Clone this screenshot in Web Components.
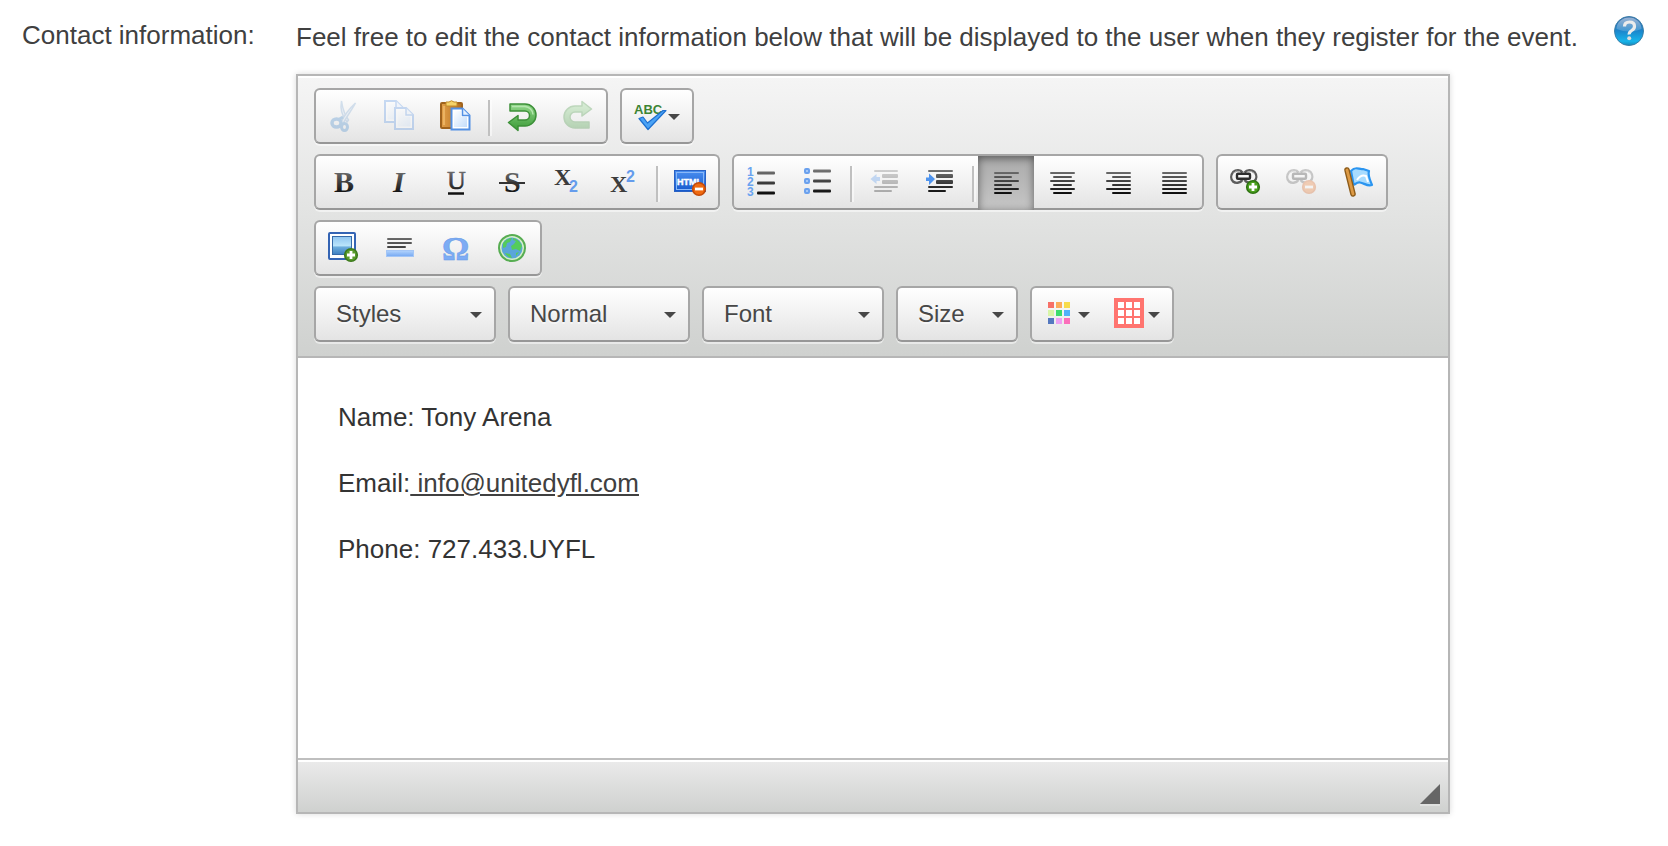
<!DOCTYPE html>
<html lang="en">
<head>
<meta charset="utf-8">
<title>Contact information</title>
<style>
    body {
        margin: 0;
        background: #fff;
        color: #404040;
        font-family: "Liberation Sans", Arial, Helvetica, sans-serif;
        font-size: 26px;
        line-height: 40px;
    }

    p {
        margin: 0 0 26px;
    }

    p a {
        color: #404040;
    }
</style>
</head>
<body>

<form-row>
    <span slot="label">Contact information:</span>
    <help-text slot="intro">Feel free to edit the contact information below that will be displayed to the user when they register for the event.</help-text>

    <rich-editor>
        <tool-row slot="toolbar">
            <tool-group>
                <tool-button icon="cut" label="Cut" disabled></tool-button>
                <tool-button icon="copy" label="Copy" disabled></tool-button>
                <tool-button icon="paste" label="Paste"></tool-button>
                <tool-separator></tool-separator>
                <tool-button icon="undo" label="Undo"></tool-button>
                <tool-button icon="redo" label="Redo" disabled></tool-button>
            </tool-group>
            <tool-group>
                <tool-button icon="spell" label="Spell check" menu></tool-button>
            </tool-group>
        </tool-row>

        <tool-row slot="toolbar">
            <tool-group>
                <tool-button icon="bold" label="Bold"></tool-button>
                <tool-button icon="italic" label="Italic"></tool-button>
                <tool-button icon="underline" label="Underline"></tool-button>
                <tool-button icon="strike" label="Strike through"></tool-button>
                <tool-button icon="sub" label="Subscript"></tool-button>
                <tool-button icon="sup" label="Superscript"></tool-button>
                <tool-separator></tool-separator>
                <tool-button icon="html" label="Remove format"></tool-button>
            </tool-group>
            <tool-group>
                <tool-button icon="numbers" label="Numbered list"></tool-button>
                <tool-button icon="bullets" label="Bulleted list"></tool-button>
                <tool-separator></tool-separator>
                <tool-button icon="outdent" label="Decrease indent" disabled></tool-button>
                <tool-button icon="indent" label="Increase indent"></tool-button>
                <tool-separator></tool-separator>
                <tool-button icon="left" label="Align left" pressed></tool-button>
                <tool-button icon="center" label="Center"></tool-button>
                <tool-button icon="right" label="Align right"></tool-button>
                <tool-button icon="justify" label="Justify"></tool-button>
            </tool-group>
            <tool-group>
                <tool-button icon="link" label="Link"></tool-button>
                <tool-button icon="unlink" label="Unlink" disabled></tool-button>
                <tool-button icon="anchor" label="Anchor"></tool-button>
            </tool-group>
        </tool-row>

        <tool-row slot="toolbar">
            <tool-group>
                <tool-button icon="image" label="Image"></tool-button>
                <tool-button icon="rule" label="Horizontal line"></tool-button>
                <tool-button icon="omega" label="Special character"></tool-button>
                <tool-button icon="globe" label="IFrame"></tool-button>
            </tool-group>
        </tool-row>

        <tool-row slot="toolbar">
            <tool-combo label="Styles"></tool-combo>
            <tool-combo label="Normal"></tool-combo>
            <tool-combo label="Font"></tool-combo>
            <tool-combo label="Size" small></tool-combo>
            <tool-group>
                <tool-button icon="colors" label="Text color" menu></tool-button>
                <tool-button icon="table" label="Background color" menu></tool-button>
            </tool-group>
        </tool-row>

        <p>Name: Tony Arena</p>
        <p>Email:<a href="mailto:info@unitedyfl.com">&nbsp;info@unitedyfl.com</a></p>
        <p>Phone: 727.433.UYFL</p>
    </rich-editor>
</form-row>

<script>
// shared gradients, each svg gets its own copy because ids don't cross shadow roots
const DEFS = `
    <defs>
        <linearGradient id="ink" gradientUnits="userSpaceOnUse" x1="0" y1="3" x2="0" y2="28">
            <stop offset="0" stop-color="#777"/><stop offset="1" stop-color="#0c0c0c"/>
        </linearGradient>
        <linearGradient id="blue" x1="0" y1="0" x2="0" y2="1">
            <stop offset="0" stop-color="#b4d4fd"/><stop offset="1" stop-color="#74a8f2"/>
        </linearGradient>
        <linearGradient id="page" x1="0" y1="0" x2="1" y2="1">
            <stop offset="0" stop-color="#fff"/><stop offset="1" stop-color="#c4ddfb"/>
        </linearGradient>
        <linearGradient id="green" x1="0" y1="0" x2="0" y2="1">
            <stop offset="0" stop-color="#93d88b"/><stop offset="1" stop-color="#3a9a36"/>
        </linearGradient>
        <linearGradient id="wood" x1="0" y1="0" x2="1" y2="0">
            <stop offset="0" stop-color="#e2a04a"/><stop offset="1" stop-color="#b36c1c"/>
        </linearGradient>
        <linearGradient id="screen" x1="0" y1="0" x2="0" y2="1">
            <stop offset="0" stop-color="#4b8ff0"/><stop offset="1" stop-color="#1559cc"/>
        </linearGradient>
        <linearGradient id="sky" x1="0" y1="0" x2="0" y2="1">
            <stop offset="0" stop-color="#8fc4f0"/><stop offset=".5" stop-color="#b9e4fb"/>
            <stop offset=".6" stop-color="#6bacdc"/><stop offset="1" stop-color="#3f7fc0"/>
        </linearGradient>
    </defs>`;

// horizontal bars: [x1, x2, y, thickness]
const bars = (list) => `<g fill="url(#ink)">${list.map(([a, b, y, w = 2]) =>
    `<rect x="${a}" y="${y - w / 2}" width="${b - a}" height="${w}" rx="1"/>`).join('')}</g>`;

const badge = (x, y, color, edge, plus) => `
    <circle cx="${x}" cy="${y}" r="6.3" fill="${color}" stroke="${edge}" stroke-width="1.6"/>
    <path d="M${x - 4} ${y}h8${plus ? `M${x} ${y - 4}v8` : ''}" stroke="#fff" stroke-width="2.8" fill="none"/>`;

const alignRows = (a, b) => bars([7, 11, 15, 19, 23, 27].map((y, i) => i % 2 ? [a, b, y] : [4, 29, y]));

const chain = `
    <g fill="none" stroke="#5c5c5c" stroke-width="2.4">
        <path d="M12.500 14C10 17.500 5.500 17.500 3 15.500C.6 13 .6 9 3.200 6C6 3.500 10.500 3.500 12.500 6.500"/>
        <path d="M14.500 6.500C17 3.500 21.500 3.500 24.500 6C27 9 27 13 24 15.500C21.500 17.500 17 17.500 14.500 14"/>
        <rect x="7" y="7.800" width="13" height="5" rx="1" stroke="#2c2c2c" stroke-width="2.400"/>
    </g>
    <path d="M3 7.500Q6 4 10 5.500M17.500 5.500Q21.500 4.200 24.500 7.500" fill="none" stroke="#b5b5b5" stroke-width="1"/>`;

const page = (x, y) => `
    <path d="M${x} ${y}h11l7 7v14h-18z" fill="#fff" stroke="#5390e4" stroke-width="2"/>
    <path d="M${x + 2.5} ${y + 2.5}h7v6h6v10h-13z" fill="url(#page)"/>
    <path d="M${x + 11} ${y}v7h7" fill="#e4f0ff" stroke="#5390e4" stroke-width="1.500"/>`;

// the nine little squares of the colour menus
const squares = (colors) => colors.map((c, i) =>
    `<rect x="${4 + i % 3 * 8}" y="${4 + Math.floor(i / 3) * 8}" width="6" height="6" fill="${c}"/>`).join('');

const SERIF = 'font-family="Liberation Serif, serif"';
const SANS = 'font-family="Liberation Sans, sans-serif" font-weight="bold"';

const ICONS = {
    cut: `
        <path d="M13.500 1C12 9 14 16 19 22l1.500-2C16 14 14.500 8 13.500 1z" fill="#d7e6f6" stroke="#7ba6d2" stroke-width="1.500"/>
        <path d="M27.500 3C22 8 16 16 12.500 23l2.500 1C18 17 24 10 27.500 3z" fill="#d7e6f6" stroke="#7ba6d2" stroke-width="1.500"/>
        <ellipse cx="8.500" cy="23" rx="4.500" ry="4" fill="none" stroke="#3c86cc" stroke-width="3.500"/>
        <ellipse cx="16.500" cy="27" rx="3" ry="3.500" fill="none" stroke="#3c86cc" stroke-width="3"/>
        <path d="M10 20l5-3" stroke="#3c86cc" stroke-width="3"/>`,
    copy: page(1, 1) + page(11, 8),
    paste: `
        <rect x="1" y="3" width="21" height="25" rx="1" fill="url(#wood)" stroke="#a0631d" stroke-width="2"/>
        <path d="M6 2h3q2.500-2.500 5 0h3v4H6z" fill="#f5d36a" stroke="#c08a2a" stroke-width="1"/>
        <path d="M4 6v19" stroke="#f0bb6c" stroke-width="1.500"/>` + page(11.5, 8.5),
    undo: `
        <path d="M4 4h15a11 11 0 0 1 0 22h-7v4.500L2.500 22.500L12 15.500V20h7a4.500 4.500 0 0 0 0-9H4z" fill="url(#green)" stroke="#3c9038" stroke-width="1.500" stroke-linejoin="round"/>
        <path d="M6 6.500h13a8.500 8.500 0 0 1 8 8" fill="none" stroke="#b5e6ae" stroke-width="1.500"/>`,
    redo: `
        <path d="M27 28H13a11 11 0 0 1 0-22h7V1.500L29.500 9L20 16v-4h-7a5 5 0 0 0 0 10h14z" fill="url(#green)" stroke="#3c9038" stroke-width="1.500" stroke-linejoin="round"/>`,
    spell: `
        <text x="0" y="14" ${SANS} font-size="13" fill="#3d8433">ABC</text>
        <path d="M5 18.500l4-1.500 4.500 6L29 10.500h3L14 29.500z" fill="#4ba3f5" stroke="#1d6fd0" stroke-width="1.200" stroke-linejoin="round"/>`,
    bold: `<text x="6" y="26" ${SERIF} font-size="30" font-weight="bold" fill="url(#ink)">B</text>`,
    italic: `<text x="9" y="26" ${SERIF} font-size="30" font-weight="bold" font-style="italic" fill="url(#ink)">I</text>`,
    underline: `<text x="7" y="23" ${SERIF} font-size="26" fill="url(#ink)" stroke="url(#ink)" stroke-width=".6">U</text>
        <path d="M8 27.500h16" stroke="#111" stroke-width="2.500"/>`,
    strike: `<text x="8" y="26" ${SERIF} font-size="30" font-weight="bold" fill="url(#ink)">S</text>
        <path d="M3 17h26" stroke="#333" stroke-width="2"/>`,
    sub: `<text x="2" y="19" ${SERIF} font-size="24" font-weight="bold" fill="#3c3c3c">X</text>
        <text x="17" y="26" ${SANS} font-size="16" fill="#659cec">2</text>`,
    sup: `<text x="2" y="26" ${SERIF} font-size="24" font-weight="bold" fill="#3c3c3c">X</text>
        <text x="18" y="16" ${SANS} font-size="16" fill="#659cec">2</text>`,
    html: `
        <rect x=".5" y="4.500" width="31" height="21" fill="url(#screen)" stroke="#2a62c4"/>
        <rect x="2.500" y="6.500" width="27" height="17" fill="none" stroke="#8ab8f8" stroke-width="1"/>
        <text x="3" y="18.500" ${SANS} font-size="9" fill="#fff" stroke="#fff" stroke-width=".4">HTML</text>` + badge(25, 23, '#f06a10', '#c44a08', false),
    numbers: `
        <g ${SANS} font-size="12" fill="#69a3f0"><text x="1" y="10">1</text><text x="1" y="20">2</text><text x="1" y="30">3</text></g>`
        + bars([[11, 29, 7, 3], [11, 29, 17, 3], [11, 29, 27, 3]]),
    bullets: `
        <g fill="#a5c8f7" stroke="#6ba1ee" stroke-width="2"><rect x="3" y="3" width="4" height="4" rx="1"/><rect x="3" y="13" width="4" height="4" rx="1"/><rect x="3" y="23" width="4" height="4" rx="1"/></g>`
        + bars([[11, 29, 5, 3], [11, 29, 15, 3], [11, 29, 25, 3]]),
    outdent: bars([[6, 30, 5], [14, 30, 10, 4], [14, 30, 16, 4], [6, 30, 21], [6, 24, 25]])
        + `<path d="M2.500 13l6-5v3h3.500v4H8.500v3z" fill="#4f94ee"/>`,
    indent: bars([[4, 29, 5], [12, 29, 10, 4], [12, 29, 16, 4], [4, 29, 21], [4, 22, 25]])
        + `<path d="M11 13l-6-5.500v4H2v3.500h3v4z" fill="#4f94ee"/>`,
    left: alignRows(4, 22),
    center: alignRows(7, 26),
    right: alignRows(10, 29),
    justify: alignRows(4, 29),
    link: chain + badge(23, 21, '#4ba01e', '#2f7412', true),
    unlink: chain + badge(23, 21, '#f07828', '#d8601c', false),
    anchor: `
        <path d="M9 5C14-.5 17 4 21 3l6 2c-1.500 4 1 9 3 14c-5 1.500-8-2-12-2.500S12 20 11.500 18z" fill="#a8dcff" stroke="#2b95f0" stroke-width="2.200" stroke-linejoin="round"/>
        <path d="M15 14q4-6 9-4l2 6" fill="none" stroke="#fff" stroke-width="2"/>
        <path d="M5 4l6 24" stroke="#8d5c1a" stroke-width="5.500" stroke-linecap="round"/>
        <path d="M5 4l6 24" stroke="#dd9a45" stroke-width="2.800" stroke-linecap="round"/>`,
    image: `
        <rect x="1" y="1" width="26" height="26" rx="1" fill="#fff" stroke="#3464b4" stroke-width="2"/>
        <rect x="4.500" y="4.500" width="19" height="18" fill="url(#sky)" stroke="#356aa8"/>` + badge(23, 23, '#5a9c2c', '#3c7a1c', true),
    rule: bars([[3, 28, 7], [3, 28, 11], [3, 22, 15]])
        + `<rect x="2.500" y="18.500" width="27" height="6" fill="url(#blue)" stroke="#a4c6f6"/>`,
    omega: `<text x="2" y="28" ${SERIF} font-size="34" font-weight="bold" fill="#7dacf4" stroke="#6699e6" stroke-width=".5">Ω</text>`,
    globe: `
        <circle cx="16" cy="16" r="13" fill="#d5efc9" stroke="#57ad52" stroke-width="2"/>
        <circle cx="16" cy="16" r="10.500" fill="#5aa5da"/>
        <path d="M7 11q4-5 9-5l-2 4-3 1-1 4-3 1zM17 6q7 2 9 8l-2 5-4-2-4 1-1-4 3-2 2-3-3-1zM9 21l5 1 2 4q-4 0-7-5zM20 21l3-1-3 4z" fill="#54cc5c"/>`,
    colors: squares(['#f77068', '#fbac5c', '#f7dc4c', '#d8f5a8', '#3ddb6c', '#52b1fa', '#5478bf', '#eda2f3', '#fb6fbb']),
    table: '<rect width="30" height="30" fill="#ff746f"/>' + squares(Array(9).fill('#fff'))
};

const ARROW = `<svg class="arrow" width="12" height="6" viewBox="0 0 12 6" aria-hidden="true"><path d="M0 0h12L6 6z" fill="#474747"/></svg>`;

class FormRow extends HTMLElement {
    constructor() {
        super();
        this.attachShadow({ mode: 'open' });
        this.shadowRoot.innerHTML = `
        <style>
        :host {
            display: grid;
            grid-template-columns: 274px minmax(0, 1fr);
            padding: 15px 24px 30px 22px;
        }

        .field {
            display: flex;
            flex-direction: column;
            gap: 17px;
            padding-top: 2px;
        }
        </style>
        <div><slot name="label"></slot></div>
        <div class="field"><slot name="intro"></slot><slot></slot></div>
        `;
    }
}
customElements.define('form-row', FormRow);

class HelpText extends HTMLElement {
    constructor() {
        super();
        this.attachShadow({ mode: 'open' });
        this.shadowRoot.innerHTML = `
        <style>
        :host {
            display: flex;
            align-items: flex-start;
            justify-content: space-between;
            gap: 8px;
        }

        button {
            flex: none;
            margin: -1px 0 0;
            padding: 0;
            border: 0;
            background: none;
            cursor: help;
        }

        svg {
            display: block;
        }
        </style>
        <span><slot></slot></span>
        <button type="button" aria-label="Help">
            <svg width="30" height="30" viewBox="0 0 30 30">
                <defs>
                    <linearGradient id="ball" x1="0" y1="0" x2="0" y2="1">
                        <stop offset="0" stop-color="#3466a8"/><stop offset=".5" stop-color="#1b86cc"/>
                        <stop offset=".85" stop-color="#17b4ea"/><stop offset="1" stop-color="#1689b8"/>
                    </linearGradient>
                    <linearGradient id="shine" x1="0" y1="0" x2="0" y2="1">
                        <stop offset="0" stop-color="#fff" stop-opacity=".5"/><stop offset="1" stop-color="#fff" stop-opacity=".15"/>
                    </linearGradient>
                </defs>
                <circle cx="15" cy="15" r="14.500" fill="url(#ball)" stroke="#3c7fa8" stroke-width="1"/>
                <path d="M2.500 13a12.500 11.500 0 0 1 25 0q-12 5-25 0z" fill="url(#shine)"/>
                <path d="M10.500 10.500q0-4.500 5-4.500t5 4.200q0 2.600-2.800 4.300t-2.500 4" fill="none" stroke="#ececec" stroke-width="3.200"/>
                <circle cx="15.200" cy="22.300" r="2" fill="#dcdcdc"/>
            </svg>
        </button>
        `;
    }
}
customElements.define('help-text', HelpText);

class RichEditor extends HTMLElement {
    constructor() {
        super();
        this.attachShadow({ mode: 'open' });
        this.shadowRoot.innerHTML = `
        <style>
        :host {
            display: block;
            box-sizing: border-box;
            width: 100%;
            max-width: 1154px;
            border: 2px solid #b6b6b6;
            box-shadow: 0 0 6px rgba(0,0,0,0.15);
        }

        .toolbar {
            display: flex;
            flex-direction: column;
            gap: 10px;
            padding: 12px 16px 14px;
            border-bottom: 2px solid #b6b6b6;
            background: linear-gradient(#f5f5f5, #cfd1cf);
            box-shadow: inset 0 2px 0 #fff;
        }

        .content {
            box-sizing: border-box;
            min-height: 400px;
            padding: 39px 40px 0;
            color: #333;
            outline: none;
        }

        .footer {
            display: flex;
            justify-content: flex-end;
            align-items: flex-end;
            padding: 24px 8px 8px;
            border-top: 2px solid #bfbfbf;
            background: linear-gradient(#ebebeb, #cfd1cf);
            box-shadow: inset 0 2px 0 #fff;
        }

        .resizer {
            display: block;
            box-shadow: 0 2px 0 rgba(255,255,255,0.3);
            cursor: se-resize;
        }
        </style>
        <div class="toolbar" role="toolbar" aria-label="Editor toolbar"><slot name="toolbar"></slot></div>
        <div class="content" role="textbox" aria-multiline="true" aria-label="Contact information" contenteditable="true" spellcheck="false"><slot></slot></div>
        <div class="footer">
            <svg class="resizer" width="20" height="20" viewBox="0 0 20 20"><path d="M20 0v20H0z" fill="#666"/></svg>
        </div>
        `;
    }
}
customElements.define('rich-editor', RichEditor);

class ToolRow extends HTMLElement {
    constructor() {
        super();
        this.attachShadow({ mode: 'open' });
        this.shadowRoot.innerHTML = `
        <style>
        :host {
            display: flex;
            flex-wrap: wrap;
            gap: 10px 12px;
        }
        </style>
        <slot></slot>
        `;
    }
}
customElements.define('tool-row', ToolRow);

// the bordered box is the same for groups and combos
const BOX = `
    border: 2px solid #a6a6a6;
    border-bottom-color: #979797;
    border-radius: 6px;
    background: linear-gradient(#fff, #e4e4e4);
    box-shadow: 0 2px 0 rgba(255,255,255,0.5);
`;

class ToolGroup extends HTMLElement {
    constructor() {
        super();
        this.attachShadow({ mode: 'open' });
        this.shadowRoot.innerHTML = `
        <style>
        :host {
            display: flex;
            ${BOX}
        }
        </style>
        <slot></slot>
        `;
    }
}
customElements.define('tool-group', ToolGroup);

class ToolSeparator extends HTMLElement {
    constructor() {
        super();
        this.attachShadow({ mode: 'open' });
        this.shadowRoot.innerHTML = `
        <style>
        :host {
            display: block;
            width: 2px;
            height: 36px;
            margin: 10px 4px 0;
            background: #c0c0c0;
            box-shadow: 2px 0 0 rgba(255,255,255,0.5);
        }
        </style>
        `;
    }
}
customElements.define('tool-separator', ToolSeparator);

class ToolButton extends HTMLElement {
    constructor() {
        super();
        this.attachShadow({ mode: 'open' });
        this.shadowRoot.innerHTML = `
        <style>
        :host {
            display: block;
        }

        button {
            display: flex;
            align-items: center;
            gap: 2px;
            height: 52px;
            padding: 0 12px;
            border: 0;
            background: none;
            cursor: pointer;
        }

        button:disabled {
            cursor: default;
        }

        button:disabled svg {
            opacity: 0.3;
        }

        button[aria-pressed="true"] {
            height: 54px;
            margin-bottom: -2px;
            padding-bottom: 2px;
            background: linear-gradient(#aaa, #c6c6c6);
            box-shadow: inset 0 2px 8px rgba(0,0,0,0.5);
        }

        svg {
            overflow: visible;
        }

        .arrow {
            margin-top: 2px;
        }
        </style>
        <button type="button">
            <svg width="32" height="32" viewBox="0 0 32 32" aria-hidden="true"></svg>
        </button>
        `;
        this.button = this.shadowRoot.querySelector('button');
        this.svg = this.shadowRoot.querySelector('svg');
    }

    connectedCallback() {
        this.svg.innerHTML = DEFS + ICONS[this.getAttribute('icon')];
        this.button.setAttribute('aria-label', this.getAttribute('label'));
        this.button.disabled = this.hasAttribute('disabled');
        if (this.hasAttribute('pressed')) {
            this.button.setAttribute('aria-pressed', 'true');
        }
        if (this.hasAttribute('menu')) {
            this.button.setAttribute('aria-haspopup', 'true');
            this.button.insertAdjacentHTML('beforeend', ARROW);
        }
    }
}
customElements.define('tool-button', ToolButton);

class ToolCombo extends HTMLElement {
    constructor() {
        super();
        this.attachShadow({ mode: 'open' });
        this.shadowRoot.innerHTML = `
        <style>
        :host {
            display: grid;
            box-sizing: border-box;
            width: 182px;
            align-items: center;
            ${BOX}
        }

        :host([small]) {
            width: 122px;
        }

        select, .arrow {
            grid-area: 1 / 1;
        }

        select {
            appearance: none;
            width: 100%;
            height: 52px;
            padding: 0 28px 2px 20px;
            border: 0;
            background: none;
            color: #474747;
            font-family: inherit;
            font-size: 24px;
            text-shadow: 0 2px 0 rgba(255,255,255,0.5);
        }

        .arrow {
            justify-self: end;
            margin: 2px 12px 0 0;
            pointer-events: none;
        }
        </style>
        <select><option></option></select>
        ${ARROW}
        `;
    }

    connectedCallback() {
        const label = this.getAttribute('label');
        this.shadowRoot.querySelector('select').setAttribute('aria-label', label);
        this.shadowRoot.querySelector('option').textContent = label;
    }
}
customElements.define('tool-combo', ToolCombo);
</script>
</body>
</html>
